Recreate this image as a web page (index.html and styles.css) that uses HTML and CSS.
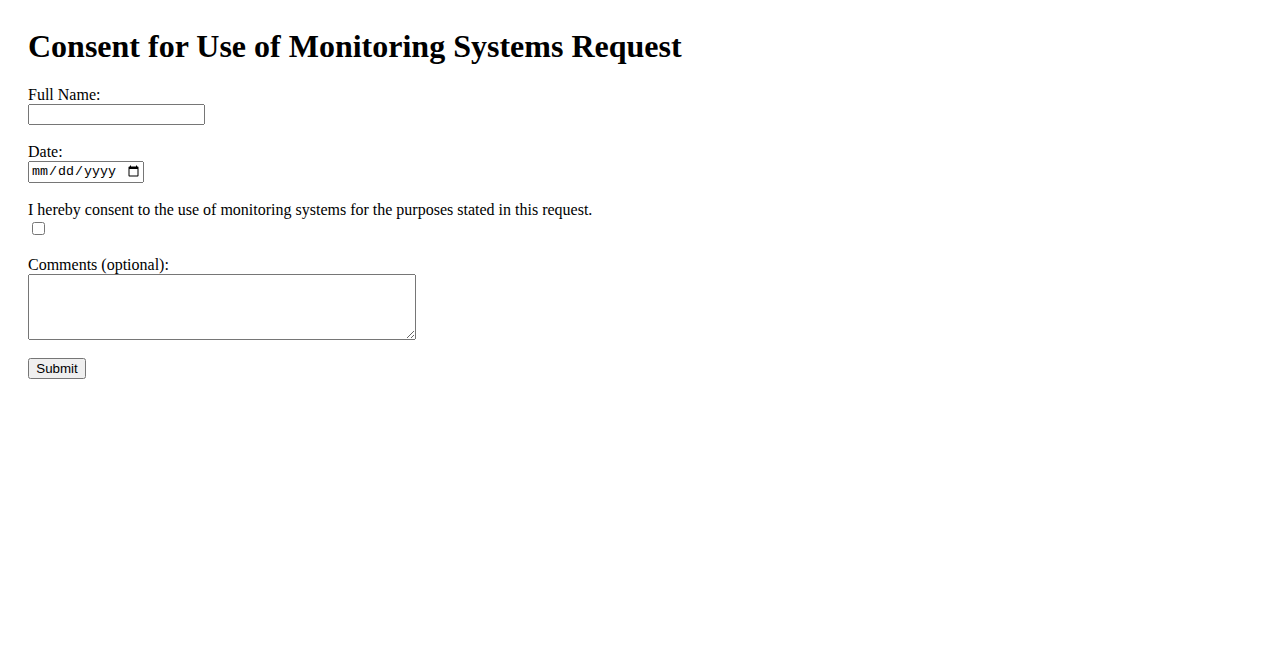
FILE: index.html
```html
<!DOCTYPE html>
<html lang="en">
<head>
    <meta charset="UTF-8">
    <meta name="viewport" content="width=device-width, initial-scale=1.0">
    <title>Consent for Use of Monitoring Systems Request</title>
    <link rel="stylesheet" href="styles.css">
</head>
<body>
    <h1 class="page-title">Consent for Use of Monitoring Systems Request</h1>
    <form class="consent-form" action="#" method="POST">
        <div class="field">
            <label for="fullName">Full Name:</label>
            <input type="text" id="fullName" name="fullName" class="text-input">
        </div>
        <div class="field">
            <label for="date">Date:</label>
            <input type="date" id="date" name="date" class="date-input">
        </div>
        <div class="field check-field">
            <label for="consent">I hereby consent to the use of monitoring systems for the purposes stated in this request.</label>
            <input type="checkbox" id="consent" name="consent" class="check-input">
        </div>
        <div class="field">
            <label for="comments">Comments (optional):</label>
            <textarea id="comments" name="comments" class="comments-input"></textarea>
        </div>
        <button type="submit" class="submit-btn">Submit</button>
    </form>
</body>
</html>
```

FILE: styles.css
```css
body { margin: 0; padding: 28px; font-family: 'Liberation Serif', 'Times New Roman', serif; font-size: 16px; color: #000; background: #fff; }
.page-title { margin: 0 0 21px; font-size: 32px; font-weight: bold; line-height: 37px; }
.field { margin-bottom: 18px; }
.field label { display: block; line-height: 18px; }
.check-field { padding-bottom: 3px; }
.text-input { display: block; box-sizing: border-box; width: 177px; height: 21px; margin: 0; }
.date-input { display: block; box-sizing: border-box; width: 116px; height: 22px; margin: 0; font-family: 'Liberation Mono', monospace; font-size: 13.33px; }
.check-input { display: block; margin: 3px 3px 0 4px; width: 13px; height: 13px; }
.comments-input { display: block; box-sizing: border-box; width: 388px; height: 66px; margin: 0; }
.submit-btn { display: block; box-sizing: border-box; height: 21px; width: 58px; margin: 0; padding: 0; font-family: 'Liberation Sans', Arial, sans-serif; font-size: 13.33px; }
```
